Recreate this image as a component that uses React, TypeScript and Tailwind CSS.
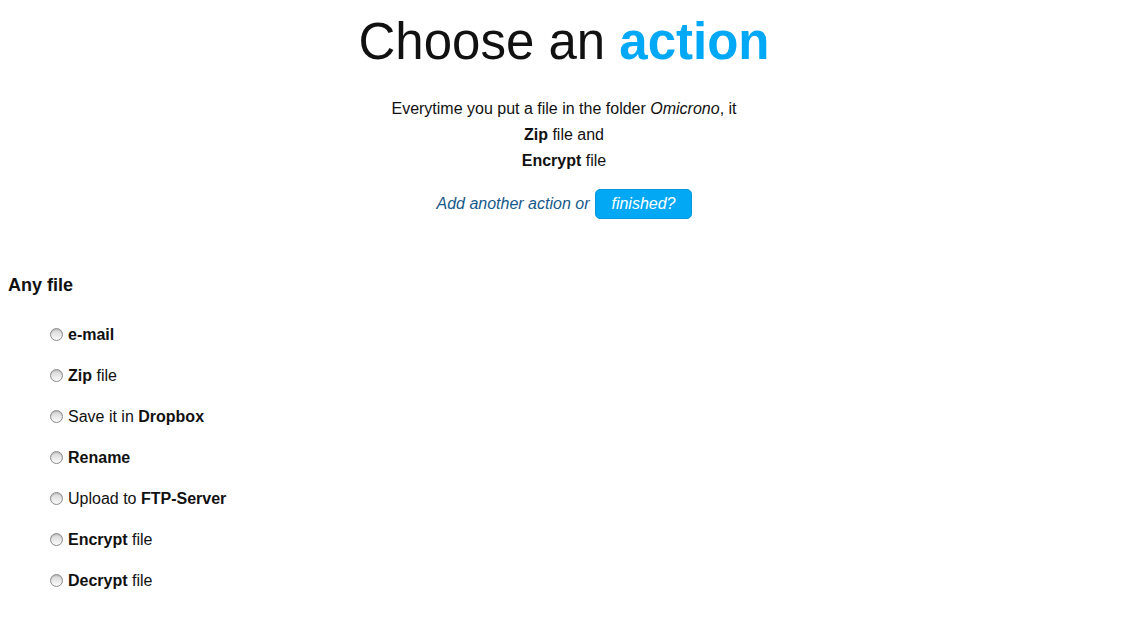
const options = [
  { pre: '', bold: 'e-mail', post: '' },
  { pre: '', bold: 'Zip', post: ' file' },
  { pre: 'Save it in ', bold: 'Dropbox', post: '' },
  { pre: '', bold: 'Rename', post: '' },
  { pre: 'Upload to ', bold: 'FTP-Server', post: '' },
  { pre: '', bold: 'Encrypt', post: ' file' },
  { pre: '', bold: 'Decrypt', post: ' file' },
]

function Radio() {
  return (
    <span className="inline-block w-[13px] h-[13px] rounded-full border border-[#8a8a8a] bg-gradient-to-b from-[#d4d4d4] to-[#fbfbfb] shadow-[inset_0_1px_1px_rgba(0,0,0,0.15)] shrink-0" />
  )
}

export default function App() {
  return (
    <div className="min-h-[624px] bg-white text-[#111] pr-[15px] font-['Liberation_Sans',Arial,sans-serif]">
      {/* Header */}
      <div className="pt-[12px] text-center">
        <h1 className="text-[51px] leading-[59px] font-normal">
          Choose an <span className="font-bold text-[#00a8f5]">action</span>
        </h1>
        <div className="mt-[25px] text-[16px] leading-[26px]">
          <p>
            Everytime you put a file in the folder <em>Omicrono</em>, it
          </p>
          <p>
            <strong>Zip</strong> file and
          </p>
          <p>
            <strong>Encrypt</strong> file
          </p>
        </div>
        <div className="mt-[15px] flex items-center justify-center gap-[6px]">
          <span className="italic text-[16px] text-[#17598a]">Add another action or</span>
          <button className="h-[30px] px-[15px] rounded-[5px] bg-[#02a8f3] border border-[#0898dc] text-white italic text-[16px]">
            finished?
          </button>
        </div>
      </div>

      {/* Options */}
      <div className="mt-[54px] px-[8px]">
        <h2 className="text-[18px] font-bold leading-[24px]">Any file</h2>
        <ul className="mt-[28px] pl-[42px] flex flex-col gap-[22px]">
          {options.map((o) => (
            <li key={o.bold} className="flex items-center gap-[5px] text-[16px] leading-[19px]">
              <Radio />
              <span>
                {o.pre}
                <strong>{o.bold}</strong>
                {o.post}
              </span>
            </li>
          ))}
        </ul>
      </div>
    </div>
  )
}
